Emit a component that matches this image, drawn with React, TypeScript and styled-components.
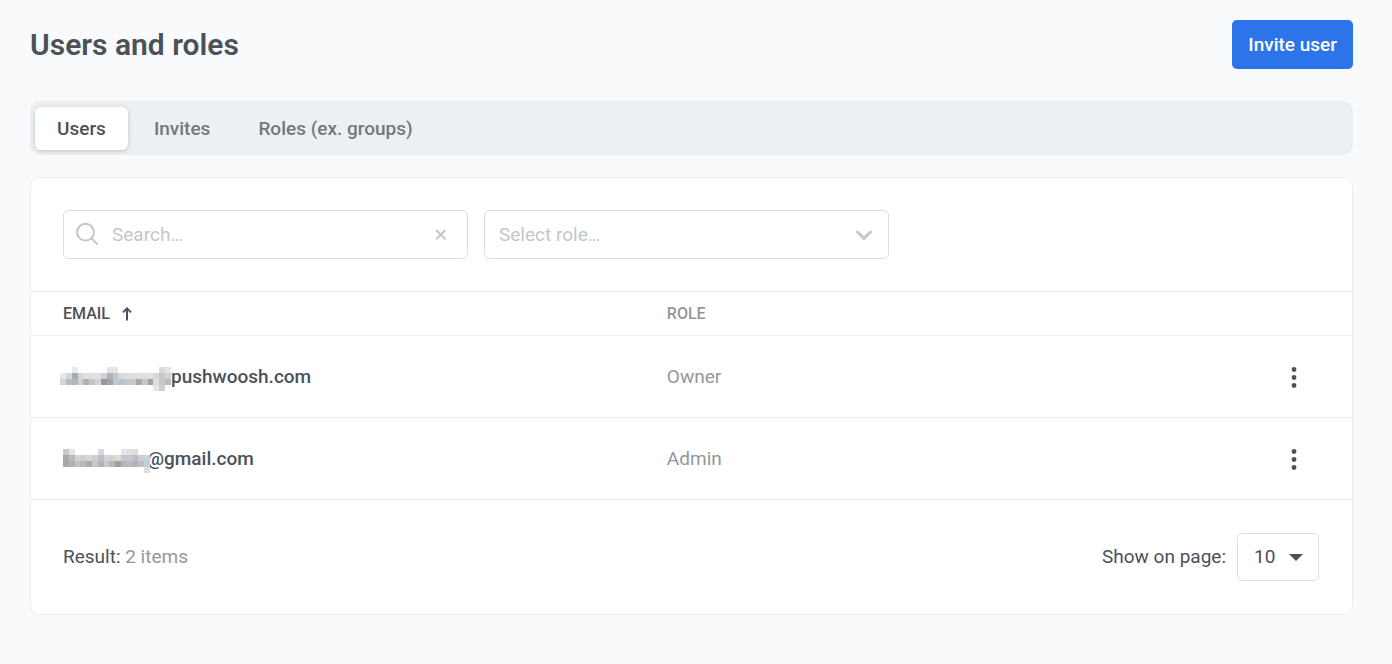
import React, { useState } from "react";
import styled, { createGlobalStyle } from "styled-components";

const color = {
  page: "#f8fafc",
  text: "#4b5158",
  muted: "#92979c",
  faint: "#c3c7ca",
  line: "#ebeef0",
  field: "#dcdfe1",
  blue: "#2d73ea",
};

const GlobalStyle = createGlobalStyle`
  *, *::before, *::after { box-sizing: border-box; }
  body {
    margin: 0;
    background: ${color.page};
    color: ${color.text};
    font: 400 19px/24px Roboto, "Liberation Sans", sans-serif;
  }
  button, input, select { font: inherit; color: inherit; }
`;

const Page = styled.main`
  padding: 20px 39px 48px 30px;
`;

const Header = styled.header`
  display: flex;
  align-items: center;
  justify-content: space-between;
  margin-bottom: 32px;
`;

const Title = styled.h1`
  margin: 0;
  font-size: 30px;
  line-height: 40px;
  font-weight: 600;
`;

const PrimaryButton = styled.button`
  height: 49px;
  padding: 0 16px;
  border: 0;
  border-radius: 5px;
  background: ${color.blue};
  color: #fff;
  font-weight: 500;
  cursor: pointer;
`;

const Tabs = styled.nav`
  display: flex;
  gap: 4px;
  height: 54px;
  padding: 6px 5px 5px;
  margin-bottom: 22px;
  border-radius: 10px;
  background: #ecf0f3;
`;

const Tab = styled.button<{ $active?: boolean }>`
  padding: 0 22px;
  border: 0;
  border-radius: 6px;
  background: ${(p) => (p.$active ? "#fff" : "transparent")};
  box-shadow: ${(p) => (p.$active ? "0 1px 4px rgba(40, 50, 60, 0.24)" : "none")};
  color: ${(p) => (p.$active ? color.text : "#73787d")};
  font-weight: 500;
  cursor: pointer;
`;

const Card = styled.section`
  border: 1px solid ${color.line};
  border-radius: 10px;
  background: #fff;
`;

const Filters = styled.form`
  display: flex;
  gap: 16px;
  padding: 32px;
`;

const Field = styled.div`
  position: relative;
  display: flex;
  align-items: center;
  flex: 0 1 405px;
  height: 49px;
  border: 1px solid ${color.field};
  border-radius: 5px;
  color: ${color.faint};
`;

const SearchField = styled(Field)`
  gap: 12px;
  padding: 0 20px 0 12px;
`;

const SearchInput = styled.input`
  flex: 1;
  min-width: 0;
  padding: 0;
  border: 0;
  outline: 0;
  background: transparent;
  color: ${color.text};
  &::placeholder { color: ${color.faint}; opacity: 1; }
`;

const IconButton = styled.button`
  display: flex;
  padding: 0;
  border: 0;
  background: transparent;
  cursor: pointer;
`;

const ClearButton = styled(IconButton)`
  color: ${color.faint};
`;

const Select = styled.select<{ $inset: number }>`
  width: 100%;
  height: 100%;
  padding: 0 ${(p) => p.$inset}px;
  border: 0;
  outline: 0;
  appearance: none;
  background: transparent;
`;

const SelectArrow = styled.svg<{ $right: number }>`
  position: absolute;
  right: ${(p) => p.$right}px;
  pointer-events: none;
`;

const Table = styled.table`
  width: 100%;
  border-collapse: separate;
  border-spacing: 0;
  table-layout: fixed;
`;

const HeadCell = styled.th<{ $sorted?: boolean; $width: string }>`
  width: ${(p) => p.$width};
  height: 44px;
  padding: 0 15px;
  border-top: 1px solid ${color.line};
  font-size: 16px;
  font-weight: 500;
  text-align: left;
  color: ${(p) => (p.$sorted ? color.text : color.muted)};
  &:first-child { padding-left: 32px; }
`;

const SortButton = styled.button`
  display: flex;
  align-items: center;
  gap: 12px;
  padding: 0;
  border: 0;
  background: transparent;
  cursor: pointer;
`;

const Cell = styled.td`
  height: 82px;
  padding: 0 15px;
  border-top: 1px solid ${color.line};
  color: ${color.muted};
  &:first-child { padding-left: 32px; }
  &:last-child { padding-right: 46px; }
`;

const Email = styled.div<{ $inset: number }>`
  position: relative;
  padding-left: ${(p) => p.$inset}px;
  color: ${color.text};
  font-weight: 500;
`;

const Mosaic = styled.svg<{ $left: number }>`
  position: absolute;
  left: ${(p) => p.$left}px;
  top: 2px;
`;

const MenuButton = styled(IconButton)`
  margin-left: auto;
  color: ${color.text};
`;

const Footer = styled.footer`
  display: flex;
  align-items: center;
  justify-content: space-between;
  padding: 33px;
  padding-left: 32px;
  border-top: 1px solid ${color.line};
`;

const Muted = styled.span`
  color: ${color.muted};
`;

const PageSize = styled.div`
  display: flex;
  align-items: center;
  gap: 11px;
`;

const SizeField = styled(Field)`
  flex: none;
  width: 82px;
  height: 48px;
  color: ${color.text};
`;

type Pixels = { left: number; width: number; inset: number; rows: string[][] };

const users: { domain: string; role: string; pixels: Pixels }[] = [
  {
    domain: "@pushwoosh.com",
    role: "Owner",
    pixels: {
      left: -3,
      width: 111,
      inset: 91,
      rows: [
        "- - e9e9e9 - - - - - e4e4e6 e5e5e7 - - - - - ffffff ffffff d9d9db e6e6e7".split(" "),
        "e7e7e8 d5d5d8 a5adb0 d4d6d8 e0e0e2 e0e0df e1e1e3 d2d3d7 b3b3b6 c2c5cb d8dadd dcdde0 dedee0 e0e0e0 dfdfe1 e2e2e3 d6d6d8 c8c8ca d2d2d5".split(" "),
        "dad3cf bababd adb9be cdd0d2 abb1bd cfc2bb d2d5d9 96979b a5a4a8 c4c6ce b6c2ce c4c7cb cdc7c4 a5a7af cbc5c6 9aa1af dfdcda c6c6c7 bcbcc0".split(" "),
        "- - - - - - - - - - - - - - - ffffff e6e6e6 cfcfd1 ffffff".split(" "),
      ],
    },
  },
  {
    domain: "@gmail.com",
    role: "Admin",
    pixels: {
      left: 0,
      width: 87,
      inset: 84,
      rows: [
        "c9c9cb e5e5e5 - - - - d9d9dc - - - e4e4e9 dedee4 dcdce1 - -".split(" "),
        "a9a9ac bababc d5d5d6 d0d0d4 d7d7d9 cdcfd4 bfc0c6 d4d4d6 d3d2d2 dbdbdd c6c6cc c5c7ce bbbcc5 cfcfd3 d1d1d5".split(" "),
        "a7a7aa b1b1b3 c9c0bb b9b9bd a5acb2 d0c5bf a8b4c0 cccac9 c7b2aa 9d9ea2 b4b4b7 b5babd b0b2be bfc0c7 c2d0d9".split(" "),
        "- - - - - - - - - - - - - - dedee1".split(" "),
      ],
    },
  },
];

function Redaction({ left, width, rows }: { left: number; width: number; rows: string[][] }) {
  return (
    <Mosaic
      $left={left}
      width={width}
      height="24"
      viewBox={`0 0 ${rows[0].length} 4`}
      preserveAspectRatio="none"
      shapeRendering="crispEdges"
      aria-hidden="true"
    >
      {rows.map((row, y) =>
        row.map((c, x) =>
          c === "-" ? null : <rect key={`${x}-${y}`} x={x} y={y} width="1" height="1" fill={`#${c}`} />
        )
      )}
    </Mosaic>
  );
}

export default function App() {
  const [tab, setTab] = useState("Users");
  const [query, setQuery] = useState("");

  return (
    <>
      <GlobalStyle />
      <Page>
        <Header>
          <Title>Users and roles</Title>
          <PrimaryButton type="button">Invite user</PrimaryButton>
        </Header>

        <Tabs aria-label="Sections">
          {["Users", "Invites", "Roles (ex. groups)"].map((name) => (
            <Tab key={name} type="button" $active={name === tab} onClick={() => setTab(name)}>
              {name}
            </Tab>
          ))}
        </Tabs>

        <Card>
          <Filters onSubmit={(e) => e.preventDefault()}>
            <SearchField>
              <svg width="24" height="24" viewBox="0 0 24 24" fill="none" stroke="currentColor" strokeWidth="2" aria-hidden="true">
                <circle cx="9.5" cy="9.2" r="8.4" />
                <path d="M15.4 15.2 21.8 21.6" />
              </svg>
              <SearchInput
                aria-label="Search"
                placeholder="Search…"
                value={query}
                onChange={(e) => setQuery(e.target.value)}
              />
              <ClearButton type="button" aria-label="Clear search" onClick={() => setQuery("")}>
                <svg width="12" height="12" viewBox="0 0 12 12" stroke="currentColor" strokeWidth="2">
                  <path d="M1.2 1 10.4 10.2M10.4 1 1.2 10.2" />
                </svg>
              </ClearButton>
            </SearchField>
            <Field>
              <Select $inset={14} aria-label="Role" defaultValue="">
                <option value="">Select role…</option>
                <option>Owner</option>
                <option>Admin</option>
              </Select>
              <SelectArrow $right={15} width="18" height="12" viewBox="0 0 18 12" fill="none" stroke="#c6c9cb" strokeWidth="3" aria-hidden="true">
                <path d="M2.5 3 9 9.4 15.5 3" strokeLinecap="round" />
              </SelectArrow>
            </Field>
          </Filters>

          <Table>
            <thead>
              <tr>
                <HeadCell $width="47%" $sorted aria-sort="ascending">
                  <SortButton type="button">
                    EMAIL
                    <svg width="10" height="14" viewBox="0 0 10 14" fill="none" stroke="currentColor" strokeWidth="2" aria-hidden="true">
                      <path d="M5 13.5V2M1 5.4 5 1.4 9 5.4" />
                    </svg>
                  </SortButton>
                </HeadCell>
                <HeadCell $width="43%">ROLE</HeadCell>
                <HeadCell $width="10%" aria-label="Actions" />
              </tr>
            </thead>
            <tbody>
              {users.map((user) => (
                <tr key={user.domain}>
                  <Cell>
                    <Email $inset={user.pixels.inset}>
                      {user.domain}
                      <Redaction left={user.pixels.left} width={user.pixels.width} rows={user.pixels.rows} />
                    </Email>
                  </Cell>
                  <Cell>{user.role}</Cell>
                  <Cell>
                    <MenuButton type="button" aria-label="User actions">
                      <svg width="24" height="24" viewBox="0 0 24 24" fill="currentColor">
                        <circle cx="12" cy="4.5" r="2.4" />
                        <circle cx="12" cy="12.5" r="2.4" />
                        <circle cx="12" cy="20.5" r="2.4" />
                      </svg>
                    </MenuButton>
                  </Cell>
                </tr>
              ))}
            </tbody>
          </Table>

          <Footer>
            <span>
              Result: <Muted>2 items</Muted>
            </span>
            <PageSize>
              <label htmlFor="page-size">Show on page:</label>
              <SizeField>
                <Select id="page-size" $inset={16} defaultValue="10">
                  <option>10</option>
                  <option>25</option>
                  <option>50</option>
                </Select>
                <SelectArrow $right={15} width="14" height="7" viewBox="0 0 14 7" fill={color.text} aria-hidden="true">
                  <path d="M0 0H14L7 7Z" />
                </SelectArrow>
              </SizeField>
            </PageSize>
          </Footer>
        </Card>
      </Page>
    </>
  );
}
